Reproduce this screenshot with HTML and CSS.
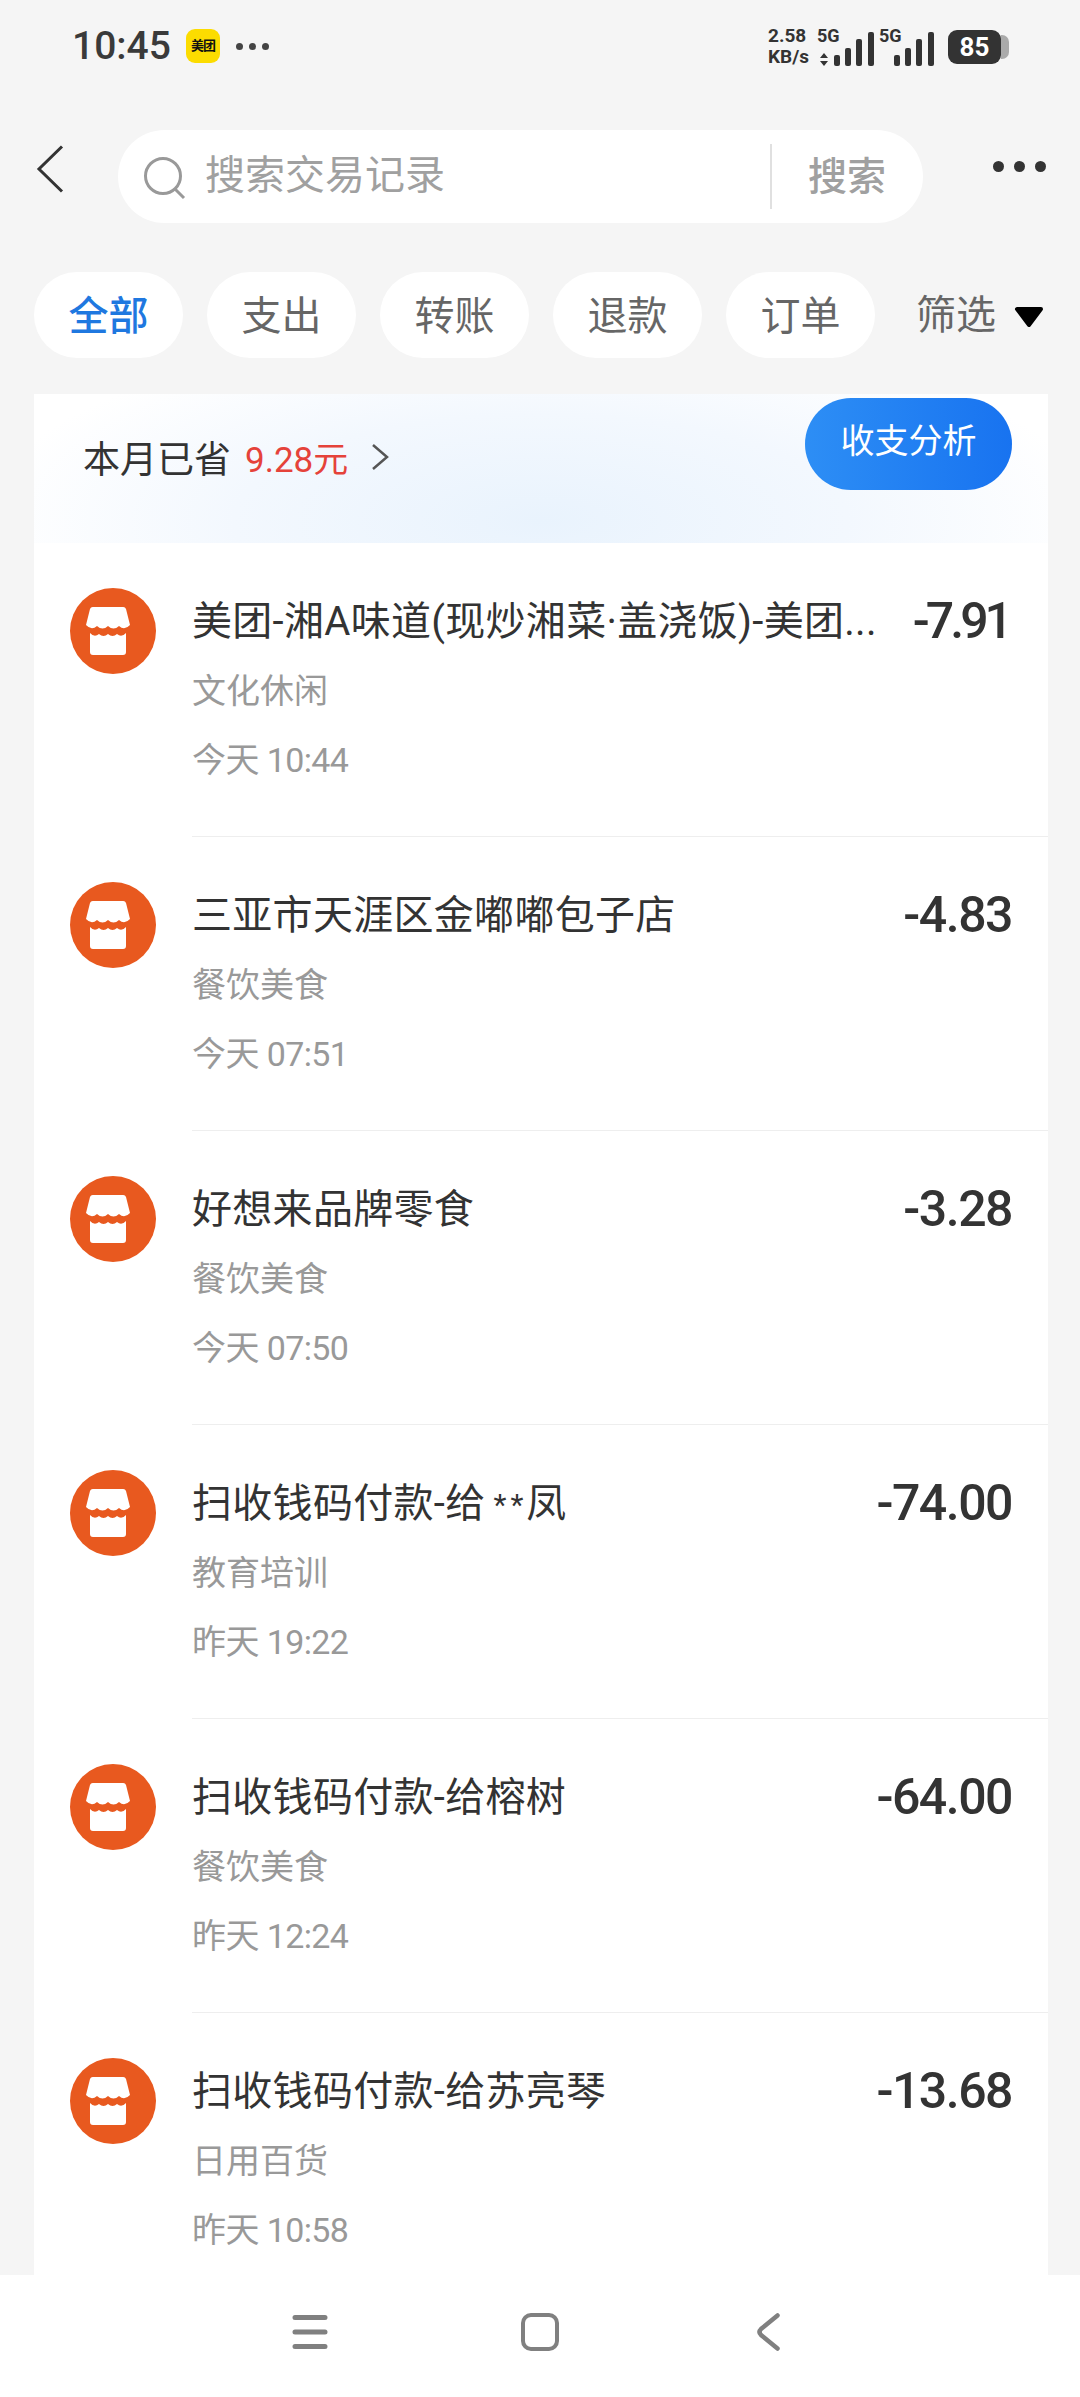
FILE: index.html
```html
<!DOCTYPE html>
<html lang="zh-CN">
<head>
  <meta charset="UTF-8"/>
  <meta name="viewport" content="width=device-width, initial-scale=1.0"/>
  <title>交易记录</title>
  <link rel="stylesheet" href="styles.css">
</head>
<body>
  <svg class="defs" width="0" height="0">
    <symbol id="shop" viewBox="0 0 86 86">
      <circle cx="43" cy="43" r="43" fill="#e8591f"/>
      <path fill="#fff" d="M23 19H53a3 3 0 0 1 3 2L60 37q-5.500 6-11 1q-5.500 5-11 0q-5.500 5-11 0q-5.500 5-11-1L20 21a3 3 0 0 1 3-2z"/>
      <path fill="#fff" d="M20 45q4.500 5 9 1q4.500 4 9 0q4.500 4 9 0q4.500 4 9-1V64a3 3 0 0 1-3 3H23a3 3 0 0 1-3-3z"/>
    </symbol>
    <symbol id="bars" viewBox="0 0 56 34">
      <rect x="0" y="23" width="6" height="11" rx="2"/>
      <rect x="11" y="16" width="6" height="18" rx="2"/>
      <rect x="22" y="7" width="6" height="27" rx="2"/>
      <rect x="34" y="0" width="6" height="34" rx="2"/>
    </symbol>
  </svg>

  <!-- status bar -->
  <div class="status">
    <div class="status-left">
      <span class="clock">10:45</span>
      <span class="mt-icon">美团</span>
      <span class="status-dots"><i></i><i></i><i></i></span>
    </div>
    <div class="status-right">
      <div class="net"><span>2.58</span><span>KB/s</span></div>
      <div class="sim">
        <span class="sim-label">5G</span>
        <svg class="arrows" width="10" height="13" viewBox="0 0 10 13"><path fill="#333" d="M5 0l4 5H1zM5 13L1 8h8z"/></svg>
        <svg class="bars" width="41" height="34"><use href="#bars" width="56" height="34"/></svg>
      </div>
      <div class="sim second">
        <span class="sim-label">5G</span>
        <svg class="bars" width="41" height="34"><use href="#bars" width="56" height="34"/></svg>
      </div>
      <div class="battery">85</div>
    </div>
  </div>

  <!-- search -->
  <div class="search-row">
    <svg class="back" width="28" height="48" viewBox="0 0 28 48"><path d="M26 1.500L3 24l23 22.500" fill="none" stroke="#333" stroke-width="3"/></svg>
    <div class="search-box">
      <svg class="search-icon" width="44" height="44" viewBox="0 0 44 44"><circle cx="20" cy="20" r="17.500" fill="none" stroke="#999" stroke-width="3"/><path d="M32 33l9 9" stroke="#999" stroke-width="3"/></svg>
      <span class="placeholder">搜索交易记录</span>
      <span class="search-btn">搜索</span>
    </div>
    <div class="more"><i></i><i></i><i></i></div>
  </div>

  <!-- tabs -->
  <div class="tabs">
    <span class="tab active">全部</span>
    <span class="tab">支出</span>
    <span class="tab">转账</span>
    <span class="tab">退款</span>
    <span class="tab">订单</span>
    <span class="filter">筛选<svg class="caret" width="30" height="22" viewBox="0 0 30 22"><path d="M3 3h24L15 19z" fill="#000" stroke="#000" stroke-width="4" stroke-linejoin="round"/></svg></span>
  </div>

  <div class="card">
    <div class="saved">
      <span class="saved-label">本月已省</span>
      <span class="saved-num">9.28元</span>
      <svg width="20" height="28" viewBox="0 0 20 28"><path d="M3 2l14 12L3 26" fill="none" stroke="#555" stroke-width="2.500"/></svg>
      <span class="analyse">收支分析</span>
    </div>

    <div class="row">
      <svg class="shop" width="86" height="86"><use href="#shop"/></svg>
      <div class="row-body">
        <div class="row-top"><span class="name">美团-湘A味道(现炒湘菜·盖浇饭)-美团...</span><span class="amount first">-7.91</span></div>
        <div class="cat">文化休闲</div>
        <div class="time">今天 10:44</div>
      </div>
    </div>
    <div class="row">
      <svg class="shop" width="86" height="86"><use href="#shop"/></svg>
      <div class="row-body">
        <div class="row-top"><span class="name">三亚市天涯区金嘟嘟包子店</span><span class="amount">-4.83</span></div>
        <div class="cat">餐饮美食</div>
        <div class="time">今天 07:51</div>
      </div>
    </div>
    <div class="row">
      <svg class="shop" width="86" height="86"><use href="#shop"/></svg>
      <div class="row-body">
        <div class="row-top"><span class="name">好想来品牌零食</span><span class="amount">-3.28</span></div>
        <div class="cat">餐饮美食</div>
        <div class="time">今天 07:50</div>
      </div>
    </div>
    <div class="row">
      <svg class="shop" width="86" height="86"><use href="#shop"/></svg>
      <div class="row-body">
        <div class="row-top"><span class="name">扫收钱码付款-给<span class="stars">**</span>凤</span><span class="amount">-74.00</span></div>
        <div class="cat">教育培训</div>
        <div class="time">昨天 19:22</div>
      </div>
    </div>
    <div class="row">
      <svg class="shop" width="86" height="86"><use href="#shop"/></svg>
      <div class="row-body">
        <div class="row-top"><span class="name">扫收钱码付款-给榕树</span><span class="amount">-64.00</span></div>
        <div class="cat">餐饮美食</div>
        <div class="time">昨天 12:24</div>
      </div>
    </div>
    <div class="row">
      <svg class="shop" width="86" height="86"><use href="#shop"/></svg>
      <div class="row-body">
        <div class="row-top"><span class="name">扫收钱码付款-给苏亮琴</span><span class="amount">-13.68</span></div>
        <div class="cat">日用百货</div>
        <div class="time">昨天 10:58</div>
      </div>
    </div>
  </div>

  <!-- system nav -->
  <div class="navbar">
    <svg width="36" height="34" viewBox="0 0 36 34"><path d="M3 2.500h30M3 17h30M3 31.500h30" stroke="#808080" stroke-width="5" stroke-linecap="round"/></svg>
    <svg class="nav-home" width="38" height="38" viewBox="0 0 38 38"><rect x="2" y="2" width="34" height="34" rx="8" fill="none" stroke="#808080" stroke-width="4"/></svg>
    <svg width="23" height="38" viewBox="0 0 23 38"><path d="M20.500 2.500L4 16q-3 3 0 6l16.500 13.500" fill="none" stroke="#808080" stroke-width="4.500" stroke-linecap="round"/></svg>
  </div>
</body>
</html>
```

FILE: styles.css
```css
* { box-sizing:border-box; }
html, body { margin:0; padding:0; }
body { width:1080px; height:2397px; overflow:hidden; display:flex; flex-direction:column; background:#f5f5f5; font-family:Roboto, "Noto Sans CJK SC", sans-serif; color:#333; }
.defs { position:absolute; }

.status { height:130px; flex:none; display:flex; justify-content:space-between; padding:24px 79px 0 72px; }
.status-left { display:flex; align-items:center; height:44px; }
.clock { font-size:39px; font-weight:500; color:#3a3a3a; width:114px; }
.mt-icon { width:34px; height:34px; border-radius:9px; background:#fcdc00; color:#111; font-size:13px; font-weight:700; line-height:34px; text-align:center; white-space:nowrap; letter-spacing:-1px; }
.status-dots { display:flex; gap:6px; margin-left:16px; }
.status-dots i { width:7px; height:7px; border-radius:50%; background:#444; }

.status-right { display:flex; align-items:flex-start; color:#333; font-weight:700; }
.net { width:49px; display:flex; flex-direction:column; font-size:19px; line-height:21px; margin-top:1px; white-space:nowrap; }
.sim { position:relative; width:62px; height:42px; padding-top:6px; display:flex; align-items:flex-end; }
.sim.second { width:69px; padding-left:15px; }
.sim-label { position:absolute; left:0; top:1px; font-size:18px; line-height:21px; }
.arrows { margin:0 5px 0 2px; }
.bars { fill:#333; }
.battery { position:relative; width:53px; height:34px; margin-top:6px; border-radius:9px; background:#333; color:#fff; font-size:26px; line-height:35px; text-align:center; }
.battery::after { content:""; position:absolute; right:-8px; top:5px; width:8px; height:24px; border-radius:0 7px 7px 0; background:#aaa; }

.search-row { height:93px; flex:none; display:flex; align-items:center; }
.back { margin:-16px 54px 0 36px; }
.search-box { width:805px; height:93px; border-radius:47px; background:#fff; display:flex; align-items:center; padding-left:25px; }
.search-icon { margin-top:2px; }
.placeholder { margin-left:18px; font-size:40px; line-height:44px; margin-top:-2px; color:#a0a0a0; width:565px; }
.search-btn { width:153px; height:65px; border-left:2px solid #e0e0e0; padding-left:36px; font-size:39px; line-height:67px; color:#a0a0a0; font-weight:500; }
.more { display:flex; gap:10px; margin:-20px 0 0 70px; }
.more i { width:11px; height:11px; border-radius:50%; background:#333; }

.tabs { flex:none; height:86px; margin-top:49px; padding-left:34px; display:flex; align-items:center; gap:24px; }
.tab { width:149px; height:86px; border-radius:43px; background:#fff; text-align:center; font-size:40px; line-height:89px; color:#666; }
.tab.active { color:#1f78e0; font-weight:500; }
.filter { display:flex; align-items:center; height:86px; margin-left:17px; font-size:40px; line-height:89px; color:#666; }
.caret { margin:3px 0 0 18px; }

.card { flex:1; min-height:0; overflow:hidden; margin:36px 32px 0 34px; background:#fff; }
.saved { height:149px; display:flex; align-items:center; gap:14px; padding:0 0 24px 49px; position:relative; background:radial-gradient(ellipse 55% 130% at 50% 85%, #e9f3fd 0%, #f3f8fe 55%, #fff 100%); }
.saved-label { font-size:37px; color:#333; }
.saved-num { font-size:35px; color:#e5423a; margin-right:8px; }
.analyse { position:absolute; right:36px; top:4px; width:207px; height:92px; border-radius:46px; background:linear-gradient(90deg, #2d8ef5, #1873f0); color:#fff; font-size:34px; line-height:86px; text-align:center; }

.row { height:294px; display:flex; padding-left:36px; }
.shop { flex:none; margin-top:45px; }
.row-body { flex:1; min-width:0; margin-left:36px; padding-right:36px; border-bottom:1px solid #eee; padding-top:47px; }
.row:last-child .row-body { border-bottom:none; }
.row-top { display:flex; justify-content:space-between; align-items:center; height:56px; }
.name { font-size:40px; letter-spacing:.3px; color:#333; white-space:nowrap; }
.stars { font-size:30px; letter-spacing:4px; margin:0 -1px 0 8px; vertical-align:2px; }
.amount { font-size:50px; font-weight:500; color:#333; letter-spacing:-1.5px; padding-top:5px; }
.amount.first { letter-spacing:-4px; margin-right:3px; }
.cat { font-size:34px; color:#999; height:48px; line-height:48px; margin-top:21px; }
.time { font-size:34px; letter-spacing:-.6px; color:#999; height:48px; line-height:48px; margin-top:21px; }

.navbar { flex:none; height:122px; background:#fff; display:flex; align-items:center; padding:0 0 8px 292px; }
.nav-home { margin:0 198px 0 193px; }
```
